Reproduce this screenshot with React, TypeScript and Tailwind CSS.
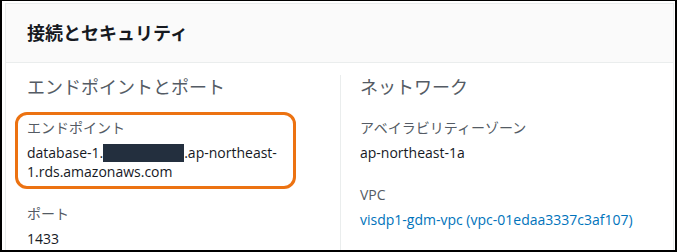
import React from "react";

const font = { fontFamily: '"Open Sans", "Noto Sans CJK JP", sans-serif' };

export default function App() {
  return (
    <div
      className="w-[677px] h-[252px] bg-white border-t border-l-2 border-r-2 border-b-2 border-black pt-[2px] pl-[3px] pr-[1px] overflow-hidden"
      style={font}
    >
      <div className="h-full border border-[#eaeded] border-b-0 flex flex-col">
        <div className="h-[59px] bg-[#fafafa] border-b border-[#eaeded] flex items-center pl-[21px]">
          <h2 className="text-[18px] font-bold text-[#16191f] leading-[24px]">接続とセキュリティ</h2>
        </div>
        <div className="flex-1 flex pt-[12px]">
          <div className="w-[334px] pl-[21px]">
            <div className="text-[18px] leading-[24px] text-[#545b64]">エンドポイントとポート</div>
            <div className="mt-[13px] -ml-[12px] w-[281px] border-[3px] border-[#ec7211] rounded-[12px] pl-[9px] pt-[3px] pb-[5px]">
              <div className="text-[14px] leading-[20px] text-[#545b64]">エンドポイント</div>
              <div className="mt-[5px] text-[14px] leading-[19px] text-[#16191f]">
                database-1.<span className="inline-block align-middle w-[81px] h-[18px] bg-[#232f3e] -mt-[2px]"></span>.ap-northeast-
                <br />
                1.rds.amazonaws.com
              </div>
            </div>
            <div className="mt-[15px] text-[14px] leading-[20px] text-[#545b64]">ポート</div>
            <div className="mt-[5px] text-[14px] leading-[20px] text-[#16191f]">1433</div>
          </div>
          <div className="flex-1 border-l border-[#eaeded] pl-[19px]">
            <div className="text-[18px] leading-[24px] text-[#545b64]">ネットワーク</div>
            <div className="mt-[19px] text-[14px] leading-[20px] text-[#545b64]">アベイラビリティーゾーン</div>
            <div className="mt-[5px] text-[14px] leading-[20px] text-[#16191f]">ap-northeast-1a</div>
            <div className="mt-[22px] text-[14px] leading-[20px] text-[#545b64]">VPC</div>
            <div className="mt-[5px] text-[14px] leading-[20px] text-[#0073bb]">visdp1-gdm-vpc (vpc-01edaa3337c3af107)</div>
          </div>
        </div>
      </div>
    </div>
  );
}
